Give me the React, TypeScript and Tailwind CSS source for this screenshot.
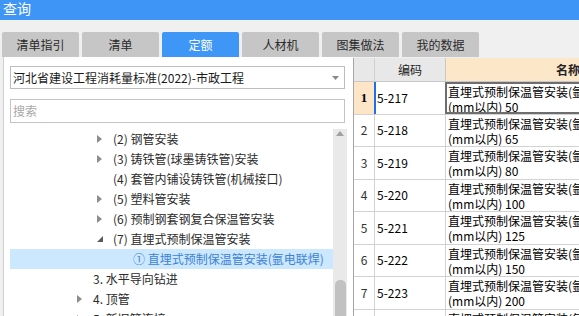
import React from "react";

const tabs = ["清单指引", "清单", "定额", "人材机", "图集做法", "我的数据"];

type TreeItem = { lvl: number; arrow: "right" | "down" | null; text: string; selected?: boolean };

const tree: TreeItem[] = [
  { lvl: 1, arrow: "right", text: "(2) 钢管安装" },
  { lvl: 1, arrow: "right", text: "(3) 铸铁管(球墨铸铁管)安装" },
  { lvl: 1, arrow: null, text: "(4) 套管内铺设铸铁管(机械接口)" },
  { lvl: 1, arrow: "right", text: "(5) 塑料管安装" },
  { lvl: 1, arrow: "right", text: "(6) 预制钢套钢复合保温管安装" },
  { lvl: 1, arrow: "down", text: "(7) 直埋式预制保温管安装" },
  { lvl: 2, arrow: null, text: "① 直埋式预制保温管安装(氩电联焊)", selected: true },
  { lvl: 0, arrow: null, text: "3. 水平导向钻进" },
  { lvl: 0, arrow: "right", text: "4. 顶管" },
  { lvl: 0, arrow: "right", text: "5. 新旧管连接" },
];

const rows = [
  { n: 1, code: "5-217", d: "50" },
  { n: 2, code: "5-218", d: "65" },
  { n: 3, code: "5-219", d: "80" },
  { n: 4, code: "5-220", d: "100" },
  { n: 5, code: "5-221", d: "125" },
  { n: 6, code: "5-222", d: "150" },
  { n: 7, code: "5-223", d: "200" },
  { n: 8, code: "5-224", d: "250" },
];

const Arrow = ({ kind }: { kind: "right" | "down" | null }) => {
  if (kind === "right")
    return (
      <svg width="5" height="8" viewBox="0 0 5 8" className="ml-[4px]">
        <path d="M0 0 L5 4 L0 8 Z" fill="#8c8c8c" />
      </svg>
    );
  if (kind === "down")
    return (
      <svg width="6" height="6" viewBox="0 0 6 6" className="ml-[4px]">
        <path d="M6 0 L6 6 L0 6 Z" fill="#5a5a5a" />
      </svg>
    );
  return null;
};

export default function App() {
  return (
    <div className="w-[579px] h-[316px] overflow-hidden bg-[#f0f0f0] flex flex-col font-['Noto_Sans_CJK_SC',sans-serif] text-[12px]">
      {/* Title */}
      <div className="h-[20px] shrink-0 bg-[#3e95f6] text-white text-[14px] leading-[16px] pl-[3px]">查询</div>

      {/* Tabs */}
      <div className="mt-[12px] h-[25px] shrink-0 flex gap-[3px] pl-[2px]">
        {tabs.map((t) => (
          <div
            key={t}
            className={
              t === "定额"
                ? "w-[77px] rounded-t-[2px] bg-[#3e96f6] text-white flex items-center justify-center"
                : "w-[77px] rounded-t-[2px] bg-[#c6c6c6] text-[#2a2a2a] flex items-center justify-center"
            }
          >
            {t}
          </div>
        ))}
      </div>

      <div className="flex flex-1 min-h-0">
        {/* Left panel */}
        <div className="ml-[3px] w-[350px] shrink-0 bg-white border-l border-[#cfcfcf] flex flex-col">
          <div className="mt-[9px] ml-[6px] w-[335px] h-[23px] border border-[#bdbdbd] flex items-center justify-between pl-[2px] pr-[5px] text-[#1a1a1a]">
            <span>河北省建设工程消耗量标准(2022)-市政工程</span>
            <svg width="7" height="4" viewBox="0 0 7 4">
              <path d="M0 0 L7 0 L3.5 4 Z" fill="#8a8a8a" />
            </svg>
          </div>
          <div className="mt-[10px] ml-[6px] w-[335px] h-[24px] border border-[#c4c4c4] flex items-center pl-[2px] text-[#a8a8a8]">
            搜索
          </div>
          <div className="mt-[6px] ml-[6px] flex flex-1 min-h-0">
            <div className="w-[323px] overflow-hidden">
              {tree.map((it, i) => (
                <div
                  key={i}
                  className={
                    it.selected
                      ? "h-[20px] flex items-center bg-[#cce8ff] text-[#3c82d6] whitespace-nowrap"
                      : "h-[20px] flex items-center text-[#2b2b2b] whitespace-nowrap"
                  }
                >
                  <div className={it.lvl === 0 ? "w-[83px] shrink-0 flex justify-end pr-[7px]" : it.lvl === 1 ? "w-[103px] shrink-0 flex justify-end pr-[7px]" : "w-[123px] shrink-0"}>
                    <div className="w-[13px]">
                      <Arrow kind={it.arrow} />
                    </div>
                  </div>
                  <span>{it.text}</span>
                </div>
              ))}
            </div>
            <div className="w-[14px] bg-[#e9e9e9] flex flex-col items-center">
              <svg width="8" height="5" viewBox="0 0 8 5" className="mt-[2px]">
                <path d="M0 5 L4 0 L8 5 Z" fill="#a0a0a0" />
              </svg>
              <div className="mt-[144px] w-[11px] flex-1 rounded-t-[5px] bg-[#c1c1c1]" />
            </div>
          </div>
        </div>

        {/* Right table */}
        <div className="flex-1 min-w-0 mt-[1px] bg-white border-l border-[#a6a6a6] overflow-hidden">
          <div className="flex h-[24px] border-b border-[#c8c8c8] whitespace-nowrap">
            <div className="w-[21px] shrink-0 bg-[#e8e8e8] border-r border-[#d0d0d0]" />
            <div className="w-[71px] shrink-0 bg-[#e8e8e8] border-r border-[#c8c8c8] flex items-center justify-center text-[#222]">编码</div>
            <div className="w-[244px] shrink-0 bg-[#fde7c9] flex items-center justify-center font-bold text-[#222]">名称</div>
          </div>
          {rows.map((r) => (
            <div key={r.n} className="flex h-[32.5px] border-b border-[#d2d2d2] whitespace-nowrap text-black">
              {r.n === 1 ? (
                <>
                  <div className="w-[20px] shrink-0 bg-[#fde5c8] flex items-center justify-center font-['Liberation_Serif',serif] font-bold text-[13px]">1</div>
                  <div className="w-[71px] shrink-0 border-l-2 border-[#1c6fe8] flex items-center pl-[1px]">{r.code}</div>
                  <div className="w-[244px] shrink-0 border-2 border-[#6e6e6e] pl-[1px] leading-[15px] overflow-hidden">
                    <div>直埋式预制保温管安装(氩电联焊) 公称直径</div>
                    <div>(mm以内) {r.d}</div>
                  </div>
                </>
              ) : (
                <>
                  <div className="w-[21px] shrink-0 border-r border-[#d2d2d2] flex items-center justify-center text-[#333]">{r.n}</div>
                  <div className="w-[71px] shrink-0 border-r border-[#d2d2d2] flex items-center pl-[2px]">{r.code}</div>
                  <div className="w-[244px] shrink-0 pl-[2px] pt-[1px] leading-[15px] overflow-hidden">
                    <div>直埋式预制保温管安装(氩电联焊) 公称直径</div>
                    <div>(mm以内) {r.d}</div>
                  </div>
                </>
              )}
            </div>
          ))}
        </div>
      </div>
    </div>
  );
}
